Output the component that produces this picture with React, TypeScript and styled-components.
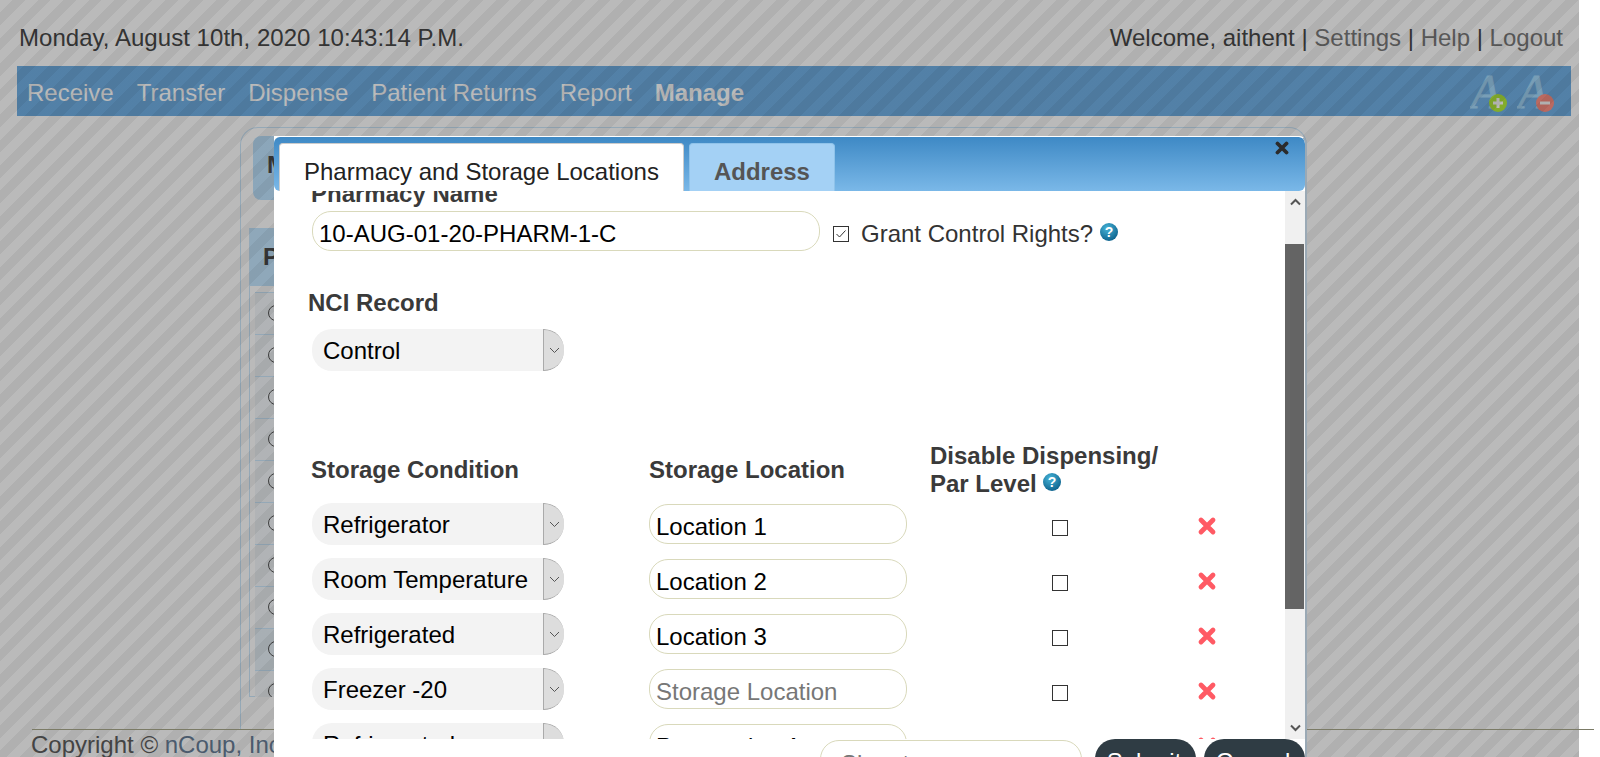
import React from 'react';
import styled, { createGlobalStyle } from 'styled-components';

const GlobalStyle = createGlobalStyle`
  html, body {
    margin: 0;
    height: 757px;
    overflow: hidden;
    background: #fff;
    font-family: "Liberation Sans", Arial, sans-serif;
    font-size: 24px;
    color: #484848;
  }
`;

const Page = styled.div`
  position: relative;
  width: 1594px;
  height: 757px;
  overflow: hidden;
`;

const Overlay = styled.div`
  position: absolute;
  left: 0;
  top: 0;
  width: 1579px;
  height: 757px;
  z-index: 1;
  background: repeating-linear-gradient(
    135deg,
    rgba(0, 0, 0, 0.27) 0,
    rgba(0, 0, 0, 0.27) 9px,
    rgba(0, 0, 0, 0.31) 9px,
    rgba(0, 0, 0, 0.31) 18px
  );
`;

const TopBar = styled.div`
  height: 66px;
  box-sizing: border-box;
  padding: 24px 31px 0 19px;
  display: flex;
  justify-content: space-between;
  line-height: 28px;
`;

const DateText = styled.span`
  letter-spacing: 0.04px;
`;

const TopLink = styled.a`
  color: #7a7a7a;
`;

const Nav = styled.nav`
  margin-left: 17px;
  width: 1554px;
  height: 50px;
  box-sizing: border-box;
  padding: 4px 16px 0 10px;
  background: #71b0e5;
  display: flex;
  align-items: center;
  gap: 23px;
  color: #fff;
`;

const NavItem = styled.a<{ $active?: boolean }>`
  font-weight: ${p => (p.$active ? 'bold' : 'normal')};
`;

const FontSizers = styled.div`
  margin-left: auto;
  display: flex;
  gap: 9px;
  align-self: flex-end;
  margin-bottom: 4px;
`;

const Panel = styled.div`
  margin: 11px 0 0 240px;
  width: 1067px;
  height: 602px;
  box-sizing: border-box;
  padding: 8px 0 0 8px;
  border: 1px solid #cbe6fa;
  border-bottom: 0;
  border-radius: 18px 18px 0 0;
`;

const PanelTab = styled.div`
  margin-left: 4px;
  width: 400px;
  height: 64px;
  box-sizing: border-box;
  padding: 15px 14px;
  background: #bfe4ff;
  border-radius: 8px;
  font-weight: bold;
  line-height: 28px;
`;

const Section = styled.div`
  margin-top: 28px;
  height: 469px;
  box-sizing: border-box;
  border-left: 1px solid #cbe6fa;
  border-bottom: 1px solid #cbe6fa;
`;

const SectionHead = styled.div`
  height: 58px;
  box-sizing: border-box;
  padding: 15px 13px;
  background: #c4e6ff;
  font-weight: bold;
  line-height: 28px;
`;

const RowList = styled.div`
  margin: 6px 0 0 5px;
  height: 405px;
  overflow: hidden;
`;

const ListRow = styled.div<{ $selected?: boolean }>`
  height: 42px;
  box-sizing: border-box;
  padding: 12px 0 0 13px;
  border-top: 1px solid #cbe6fa;
  background: ${p => (p.$selected ? '#e6f0f7' : '#f2f6f9')};
`;

const Radio = styled.span`
  display: block;
  width: 14px;
  height: 14px;
  border: 1px solid #555;
  border-radius: 50%;
`;

const Footer = styled.footer`
  position: relative;
  z-index: 2;
  margin-left: 32px;
  height: 40px;
  box-sizing: border-box;
  border-top: 1px solid #7b7b66;
  line-height: 28px;
  padding-top: 1px;
`;

const FooterText = styled.span`
  display: block;
  margin-left: -1px;
  color: #444;
`;

const FooterLink = styled.a`
  color: #4b5b6d;
`;

const Modal = styled.div`
  position: absolute;
  z-index: 3;
  left: 274px;
  top: 136px;
  width: 1033px;
  height: 660px;
  box-sizing: border-box;
  background: #fff;
  border-top: 1px solid #fff;
  border-right: 2px solid #9aa9b5;
  border-radius: 0 8px 0 0;
  overflow: hidden;
  display: flex;
  flex-direction: column;
`;

const ModalHead = styled.div`
  flex: none;
  height: 54px;
  box-sizing: border-box;
  padding: 6px 16px 0 5px;
  background: linear-gradient(#3e89c5, #7ab8e8);
  border-radius: 6px;
  display: flex;
  align-items: flex-end;
  gap: 5px;
`;

const Tab = styled.div<{ $active?: boolean }>`
  height: 48px;
  box-sizing: border-box;
  padding: 14px 24px 0;
  line-height: 28px;
  border: 1px solid ${p => (p.$active ? '#ccc' : '#8fc3ea')};
  border-bottom: 0;
  border-radius: 4px 4px 0 0;
  background: ${p => (p.$active ? '#fff' : '#a4d1f5')};
  color: ${p => (p.$active ? '#222' : '#555')};
  font-weight: ${p => (p.$active ? 'normal' : 'bold')};
`;

const Close = styled.svg`
  margin-left: auto;
  align-self: flex-start;
  margin-top: -2px;
`;

const ModalBody = styled.div`
  flex: none;
  height: 548px;
  display: flex;
`;

const Content = styled.div`
  flex: 1;
  overflow: hidden;
  box-sizing: border-box;
  padding-left: 38px;
`;

const Scroll = styled.div`
  flex: none;
  width: 20px;
  background: #f0f0f0;
  display: flex;
  flex-direction: column;
`;

const ScrollArrow = styled.div`
  height: 22px;
  display: flex;
  align-items: center;
  justify-content: center;
`;

const ScrollThumb = styled.div`
  margin: 31px 1px 0 0;
  height: 365px;
  background: #646464;
`;

const ScrollEnd = styled(ScrollArrow)`
  margin-top: auto;
`;

const FieldLabel = styled.label`
  display: block;
  font-weight: bold;
  line-height: 28px;
  color: #3a3a3a;
`;

const NameLabel = styled(FieldLabel)`
  margin: -14px 0 0 -1px;
  height: 28px;
`;

const Required = styled.sup`
  color: #e33;
  font-size: 8px;
  font-weight: normal;
  margin-left: 4px;
`;

const NameRow = styled.div`
  margin-top: 6px;
  display: flex;
  align-items: center;
`;

const TextField = styled.input<{ $width: number }>`
  width: ${p => p.$width}px;
  height: 40px;
  box-sizing: border-box;
  padding: 5px 6px 0;
  border: 1px solid #d9d9bb;
  border-radius: 19px;
  background: #fff;
  font: 24px "Liberation Sans", Arial, sans-serif;
  color: #000;
  outline: none;

  &::placeholder {
    color: #777;
    opacity: 1;
  }
`;

const CheckBox = styled.span`
  flex: none;
  width: 16px;
  height: 16px;
  box-sizing: border-box;
  border: 1px solid #333;
  display: flex;
  align-items: center;
  justify-content: center;
`;

const GrantCheck = styled(CheckBox)`
  margin: 5px 0 0 13px;
`;

const GrantText = styled.span`
  margin: 5px 0 0 12px;
  color: #333;
  line-height: 28px;
`;

const Help = styled.svg`
  flex: none;
  margin: 1px 0 0 7px;
`;

const ParHelp = styled(Help)`
  margin: 0;
  vertical-align: 1px;
`;

const NciLabel = styled(FieldLabel)`
  margin: 38px 0 0 -4px;
`;

const Select = styled.div`
  width: 252px;
  height: 42px;
  box-sizing: border-box;
  padding-left: 11px;
  background: #f3f3f3;
  border-radius: 20px;
  display: flex;
  align-items: center;
  justify-content: space-between;
  overflow: hidden;
  color: #000;
  white-space: nowrap;
`;

const SelectText = styled.span`
  padding-top: 2px;
`;

const SelectArrow = styled.span`
  flex: none;
  width: 21px;
  height: 42px;
  box-sizing: border-box;
  background: #ddd;
  border: 1px solid #aaa;
  border-right: 0;
  border-radius: 0 20px 20px 0 / 0 20px 20px 0;
  display: flex;
  align-items: center;
  justify-content: center;
`;

const NciSelect = styled(Select)`
  margin-top: 12px;
`;

const LocationGrid = styled.div`
  margin-top: 78px;
  display: grid;
  grid-template-columns: 337px 281px 260px 34px;
  grid-template-rows: 41px;
  grid-auto-rows: 42px;
  row-gap: 13px;
`;

const HeadCell = styled.div`
  margin-left: -1px;
  font-weight: bold;
  color: #3a3a3a;
  line-height: 28px;
  align-self: center;
  white-space: nowrap;
`;

const LocationHead = styled(HeadCell)`
  margin-left: 0;
`;

const Head = styled.div`
  display: contents;
`;

const LocationCell = styled.div`
  padding-top: 1px;
`;

const CheckCell = styled.div`
  display: flex;
  justify-content: center;
  padding-top: 17px;
`;

const RemoveCell = styled.div`
  display: flex;
  justify-content: center;
  padding-top: 13px;
`;

const ModalFoot = styled.div`
  flex: none;
  display: flex;
  justify-content: flex-end;
  align-items: flex-start;
  background: #fff;
  position: relative;
`;

const SignatureField = styled(TextField)`
  margin: 1px 13px 0 0;
  padding: 5px 20px 0;
  height: 42px;
`;

const FootButton = styled.button`
  width: 101px;
  height: 42px;
  padding: 4px 3px 0 0;
  border: 0;
  border-radius: 20px;
  background: #2f3c44;
  color: #fff;
  font: 24px "Liberation Sans", Arial, sans-serif;

  & + & {
    margin-left: 8px;
  }
`;

const RemoveIcon: React.FC = () => (
  <svg width="20" height="20" viewBox="0 0 20 20">
    <path d="M4 4L16 16M16 4L4 16" stroke="#ff5a64" strokeWidth="4.8" fill="none" strokeLinecap="round" />
  </svg>
);

const Chevron: React.FC = () => (
  <svg width="11" height="7" viewBox="0 0 11 7">
    <path d="M1 1L5.5 5.5L10 1" stroke="#555" strokeWidth="1" fill="none" />
  </svg>
);

const ScrollChevron: React.FC<{ up?: boolean }> = ({ up }) => (
  <svg width="11" height="8" viewBox="0 0 11 8">
    <path d={up ? 'M1 6.5L5.5 2L10 6.5' : 'M1 1.5L5.5 6L10 1.5'} stroke="#555" strokeWidth="2" fill="none" />
  </svg>
);

const HelpGlyph: React.FC = () => (
  <>
    <defs>
      <radialGradient id="helpBlue" cx="40%" cy="30%" r="75%">
        <stop offset="0%" stopColor="#46b4d8" />
        <stop offset="100%" stopColor="#0b5f8a" />
      </radialGradient>
    </defs>
    <circle cx="9" cy="9" r="9" fill="url(#helpBlue)" />
    <text x="9" y="14" textAnchor="middle" fontSize="14" fontWeight="bold" fill="#fff" fontFamily="Liberation Sans">?</text>
  </>
);

const FontSizer: React.FC<{ plus?: boolean }> = ({ plus }) => (
  <svg width="38" height="38" viewBox="0 0 38 38">
    <text x="1" y="34" fontFamily="Liberation Serif" fontStyle="italic" fontSize="48" fill="#a4d8fa" stroke="#a4d8fa" strokeWidth="0.9">A</text>
    <circle cx="28" cy="29" r="9" fill={plus ? '#b4ec3c' : '#ff9083'} />
    <path d={plus ? 'M23 29H33M28 24V34' : 'M23 29H33'} stroke="#fff" strokeWidth="3" />
  </svg>
);

const STORAGE_ROWS = [
  { condition: 'Refrigerator', location: 'Location 1' },
  { condition: 'Room Temperature', location: 'Location 2' },
  { condition: 'Refrigerated', location: 'Location 3' },
  { condition: 'Freezer -20', location: '' },
  { condition: 'Refrigerated', location: 'Preparation Area' },
];

const LIST_ROWS = [0, 1, 2, 3, 4, 5, 6, 7, 8, 9];

const App: React.FC = () => (
  <>
    <GlobalStyle />
    <Page>
      <TopBar>
        <DateText>Monday, August 10th, 2020 10:43:14 P.M.</DateText>
        <span>
          Welcome, aithent | <TopLink>Settings</TopLink> | <TopLink>Help</TopLink> | <TopLink>Logout</TopLink>
        </span>
      </TopBar>
      <Nav>
        <NavItem>Receive</NavItem>
        <NavItem>Transfer</NavItem>
        <NavItem>Dispense</NavItem>
        <NavItem>Patient Returns</NavItem>
        <NavItem>Report</NavItem>
        <NavItem $active>Manage</NavItem>
        <FontSizers>
          <FontSizer plus />
          <FontSizer />
        </FontSizers>
      </Nav>
      <Panel>
        <PanelTab>Manage</PanelTab>
        <Section>
          <SectionHead>Pharmacies</SectionHead>
          <RowList>
            {LIST_ROWS.map(i => (
              <ListRow key={i} $selected={i === 8}>
                <Radio />
              </ListRow>
            ))}
          </RowList>
        </Section>
      </Panel>
      <Footer>
        <FooterText>
          Copyright © <FooterLink>nCoup, Inc.</FooterLink>
        </FooterText>
      </Footer>
      <Overlay />
      <Modal>
        <ModalHead>
          <Tab $active>Pharmacy and Storage Locations</Tab>
          <Tab>Address</Tab>
          <Close width="14" height="14" viewBox="0 0 14 14">
            <path d="M2.5 2.5L11.5 11.5M11.5 2.5L2.5 11.5" stroke="#2b2b2b" strokeWidth="3.8" strokeLinecap="round" />
          </Close>
        </ModalHead>
        <ModalBody>
          <Content>
            <NameLabel>
              Pharmacy Name<Required>*</Required>
            </NameLabel>
            <NameRow>
              <TextField $width={508} readOnly value="10-AUG-01-20-PHARM-1-C" />
              <GrantCheck>
                <svg width="12" height="10" viewBox="0 0 12 10">
                  <path d="M1.5 5L4.5 8L10.5 1.5" stroke="#333" strokeWidth="1" fill="none" />
                </svg>
              </GrantCheck>
              <GrantText>Grant Control Rights?</GrantText>
              <Help width="18" height="18" viewBox="0 0 18 18">
                <HelpGlyph />
              </Help>
            </NameRow>
            <NciLabel>NCI Record</NciLabel>
            <NciSelect>
              <SelectText>Control</SelectText>
              <SelectArrow>
                <Chevron />
              </SelectArrow>
            </NciSelect>
            <LocationGrid>
              <Head>
                <HeadCell>Storage Condition</HeadCell>
                <LocationHead>Storage Location</LocationHead>
                <LocationHead>
                  Disable Dispensing/
                  <br />
                  Par Level{' '}
                  <ParHelp width="18" height="18" viewBox="0 0 18 18">
                    <HelpGlyph />
                  </ParHelp>
                </LocationHead>
                <span />
              </Head>
              {STORAGE_ROWS.map(row => (
                <React.Fragment key={row.condition + row.location}>
                  <Select>
                    <SelectText>{row.condition}</SelectText>
                    <SelectArrow>
                      <Chevron />
                    </SelectArrow>
                  </Select>
                  <LocationCell>
                    <TextField $width={258} readOnly value={row.location} placeholder="Storage Location" />
                  </LocationCell>
                  <CheckCell>
                    <CheckBox />
                  </CheckCell>
                  <RemoveCell>
                    <RemoveIcon />
                  </RemoveCell>
                </React.Fragment>
              ))}
            </LocationGrid>
          </Content>
          <Scroll>
            <ScrollArrow>
              <ScrollChevron up />
            </ScrollArrow>
            <ScrollThumb />
            <ScrollEnd>
              <ScrollChevron />
            </ScrollEnd>
          </Scroll>
        </ModalBody>
        <ModalFoot>
          <SignatureField $width={262} readOnly placeholder="Signature" />
          <FootButton>Submit</FootButton>
          <FootButton>Cancel</FootButton>
        </ModalFoot>
      </Modal>
    </Page>
  </>
);

export default App;
